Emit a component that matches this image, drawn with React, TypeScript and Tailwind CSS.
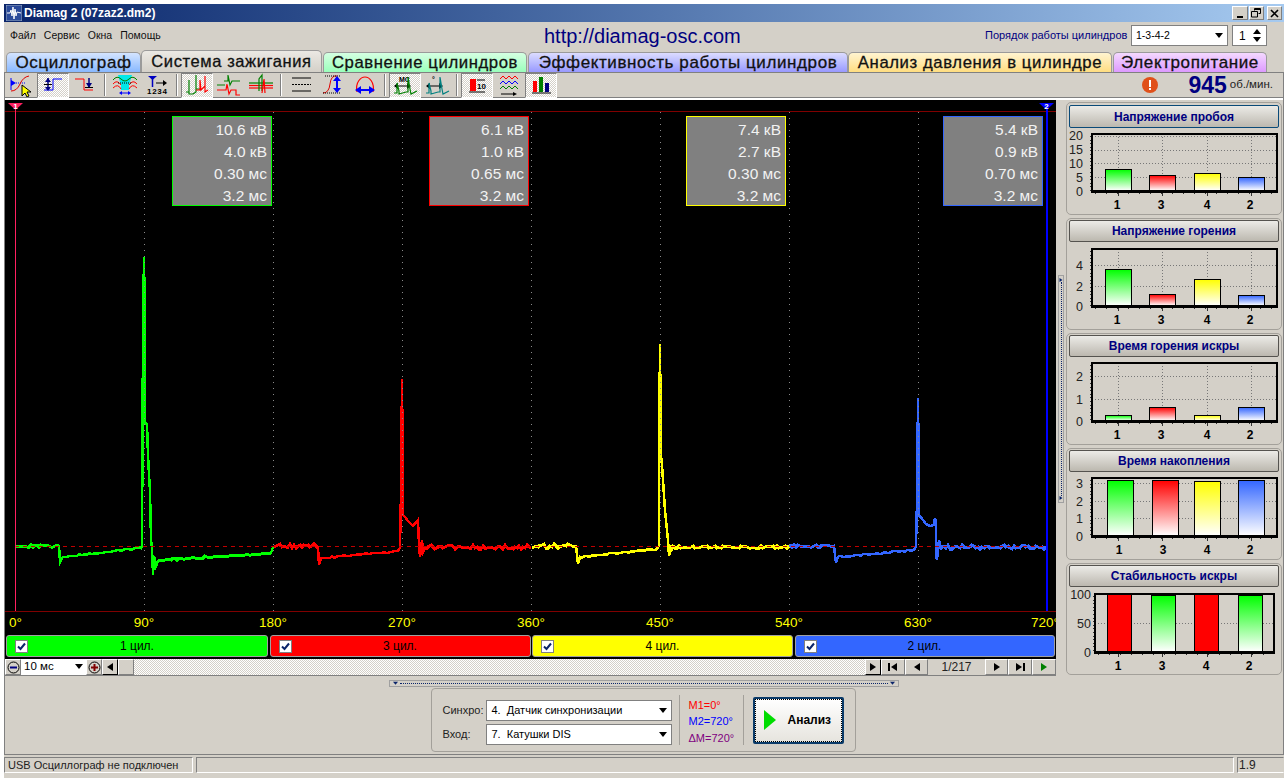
import type { ReactNode } from "react";

const GREEN = "#00ff00";
const RED = "#ff0000";
const YELLOW = "#ffff00";
const BLUE = "#3366ff";

// small repeatable noise so the traces look the same on every run
function makeRandom(seed: number) {
  let s = seed;
  return () => {
    s = (s * 1103515245 + 12345) & 0x7fffffff;
    return s / 0x7fffffff;
  };
}

type Pt = [number, number];

function noisy(x0: number, x1: number, y0: number, y1: number, amp: number, seed: number): Pt[] {
  const rnd = makeRandom(seed);
  const out: Pt[] = [];
  for (let x = x0; x <= x1; x += 2) {
    const t = (x - x0) / (x1 - x0);
    out.push([x, Math.round(y0 + (y1 - y0) * t + (rnd() - 0.5) * amp * 2)]);
  }
  return out;
}

const toPoints = (pts: Pt[]) => pts.map((p) => p.join(",")).join(" ");

const traces = [
  {
    color: GREEN,
    head: noisy(15, 60, 546, 546, 1, 7),
    dip: [[60, 562], [62, 558]] as Pt[],
    ramp: noisy(63, 141, 557, 548, 0.8, 11),
    spike: [[142, 546], [143, 327], [144, 257], [145, 330], [145, 423], [147, 424], [148, 455], [149, 475], [150, 490], [151, 540], [152, 548], [153, 575], [154, 556], [156, 566], [158, 561]] as Pt[],
    tail: noisy(159, 272, 560, 553, 0.8, 13),
    end: [[273, 547]] as Pt[],
  },
  {
    color: RED,
    head: noisy(274, 318, 546, 546, 2, 17),
    dip: [[319, 565], [321, 558]] as Pt[],
    ramp: noisy(322, 399, 558, 551, 0.8, 19),
    spike: [[400, 548], [401, 490], [402, 379], [403, 490], [403, 515], [405, 517], [408, 521], [413, 526], [418, 520], [419, 545], [420, 557], [422, 540], [423, 552]] as Pt[],
    tail: noisy(425, 531, 547, 547, 2, 23),
    end: [] as Pt[],
  },
  {
    color: YELLOW,
    head: noisy(532, 577, 546, 546, 2, 29),
    dip: [[578, 564], [580, 557]] as Pt[],
    ramp: noisy(581, 658, 557, 549, 0.8, 31),
    spike: [[659, 546], [659, 460], [660, 344], [661, 455], [662, 465], [665, 510], [668, 540], [669, 556], [671, 545], [672, 549]] as Pt[],
    tail: noisy(673, 789, 547, 547, 1.2, 37),
    end: [] as Pt[],
  },
  {
    color: BLUE,
    head: noisy(790, 835, 546, 546, 1.2, 41),
    dip: [[836, 563], [838, 557]] as Pt[],
    ramp: noisy(839, 915, 557, 550, 0.8, 43),
    spike: [[916, 546], [917, 500], [918, 398], [919, 492], [919, 516], [921, 517], [923, 520], [926, 524], [930, 526], [934, 525], [935, 518], [936, 522], [936, 555], [937, 560], [939, 540], [941, 550]] as Pt[],
    tail: noisy(942, 1047, 547, 547, 1.8, 47),
    end: [] as Pt[],
  },
];

const readouts = [
  { color: "border-[#00ff00]", left: "left-[167px]", rows: ["10.6 кВ", "4.0 кВ", "0.30 мс", "3.2 мс"] },
  { color: "border-[#ff0000]", left: "left-[424px]", rows: ["6.1 кВ", "1.0 кВ", "0.65 мс", "3.2 мс"] },
  { color: "border-[#ffff00]", left: "left-[681px]", rows: ["7.4 кВ", "2.7 кВ", "0.30 мс", "3.2 мс"] },
  { color: "border-[#3366ff]", left: "left-[938px]", rows: ["5.4 кВ", "0.9 кВ", "0.70 мс", "3.2 мс"] },
];

const degrees = [0, 90, 180, 270, 360, 450, 540, 630, 720];

const tabs = [
  { label: "Осциллограф", cls: "w-[135px] h-[20px] text-[17px] from-[#d4e4ff] to-[#88b8ff]" },
  { label: "Система зажигания", cls: "w-[181px] h-[22px] text-[16.5px] from-[#ebe9e4] to-[#d4d0c8]" },
  { label: "Сравнение цилиндров", cls: "w-[204px] h-[20px] ml-[1px] text-[16.7px] from-[#d4ffe2] to-[#99ffbb]" },
  { label: "Эффективность работы цилиндров", cls: "w-[320px] h-[20px] ml-[1px] text-[17px] from-[#dcdcff] to-[#9999ff]" },
  { label: "Анализ давления в цилиндре", cls: "w-[264px] h-[20px] text-[16.7px] from-[#fff4d0] to-[#ffdd80]" },
  { label: "Электропитание", cls: "w-[154px] h-[20px] ml-[1px] text-[17px] from-[#f4d8ff] to-[#dd99ff]" },
];

const channels = [
  { label: "1 цил.", cls: "w-[262px] bg-[#00ff00]" },
  { label: "3 цил.", cls: "w-[261px] bg-[#ff0000]" },
  { label: "4 цил.", cls: "w-[261px] bg-[#ffff00]" },
  { label: "2 цил.", cls: "w-[260px] bg-[#3366ff]" },
];

type Bar = { x0: number; x1: number; top: number; color: string };

type Chart = {
  title: string;
  focused?: boolean;
  height: string;
  top: number;
  frame: [number, number, number, number];
  yLabels: [string, number][];
  grid: number[];
  bars: Bar[];
  labelX: number[];
  labelY: number;
};

const xA = [1105, 1149, 1194, 1238];
const barW = 27;
const mkBars = (xs: number[], tops: number[], w = barW, colors = [GREEN, RED, YELLOW, BLUE]): Bar[] =>
  xs.map((x0, i) => ({ x0, x1: x0 + w, top: tops[i], color: colors[i] }));

const charts: Chart[] = [
  {
    title: "Напряжение пробоя",
    focused: true,
    height: "h-[113px]",
    top: 102,
    frame: [1092, 1277, 134, 191],
    yLabels: [["20", 135], ["15", 149], ["10", 163], ["5", 177], ["0", 191]],
    grid: [136, 150, 163, 177],
    bars: mkBars(xA, [169, 175, 173, 177]),
    labelX: [1117, 1161, 1207, 1250],
    labelY: 209,
  },
  {
    title: "Напряжение горения",
    height: "h-[112px]",
    top: 218,
    frame: [1092, 1277, 249, 306],
    yLabels: [["4", 265], ["2", 286], ["0", 306]],
    grid: [265, 286],
    bars: mkBars(xA, [269, 294, 279, 295]),
    labelX: [1117, 1161, 1207, 1250],
    labelY: 324,
  },
  {
    title: "Время горения искры",
    height: "h-[112px]",
    top: 333,
    frame: [1092, 1277, 363, 421],
    yLabels: [["2", 376], ["1", 399], ["0", 421]],
    grid: [376, 399],
    bars: mkBars(xA, [415, 407, 415, 407]),
    labelX: [1117, 1161, 1207, 1250],
    labelY: 439,
  },
  {
    title: "Время накопления",
    height: "h-[112px]",
    top: 448,
    frame: [1092, 1277, 478, 536],
    yLabels: [["3", 483], ["2", 501], ["1", 518], ["0", 536]],
    grid: [483, 501, 518],
    bars: mkBars([1107, 1152, 1194, 1238], [480, 480, 481, 480]),
    labelX: [1119, 1163, 1207, 1250],
    labelY: 554,
  },
  {
    title: "Стабильность искры",
    height: "h-[112px]",
    top: 563,
    frame: [1095, 1274, 594, 652],
    yLabels: [["100", 594], ["50", 623], ["0", 652]],
    grid: [623],
    bars: mkBars([1107, 1151, 1194, 1238], [594, 595, 594, 595], 25, [RED, GREEN, RED, GREEN]),
    labelX: [1118, 1162, 1206, 1249],
    labelY: 670,
  },
];

function Tri({ dir = "down", color = "#000", size = 8 }: { dir?: "down" | "up" | "left" | "right"; color?: string; size?: number }) {
  const pts = {
    down: "0,1 8,1 4,6",
    up: "0,6 8,6 4,1",
    left: "7,0 7,8 1,4",
    right: "1,0 1,8 7,4",
  }[dir];
  return (
    <svg width={size} height={size} viewBox="0 0 8 8" className="shrink-0">
      <polygon points={pts} fill={color} />
    </svg>
  );
}

function Dropdown({ label, cls }: { label: string; cls: string }) {
  return (
    <div className={`flex items-center justify-between bg-white border border-[#808080] ${cls}`}>
      <span className="whitespace-pre">{label}</span>
      <Tri />
    </div>
  );
}

function CheckBox() {
  return (
    <span className="flex items-center justify-center w-[13px] h-[13px] bg-white border border-[#808080]">
      <svg width="9" height="9" viewBox="0 0 9 9">
        <polyline points="1,4.5 3.5,7 8,1.5" fill="none" stroke="#0a246a" strokeWidth="2" />
      </svg>
    </span>
  );
}

// toolbar drawings
const ic = {
  cursor: (
    <svg width="26" height="24" viewBox="0 0 26 24">
      <polygon points="3,7 8,10 3,13" fill="#0000ff" />
      <line x1="3" y1="5" x2="3" y2="17" stroke="#0000ff" />
      <line x1="8" y1="10" x2="17" y2="10" stroke="#0000ff" strokeDasharray="1 1" />
      <path d="M3 18 Q9 18 12 11 T21 3" fill="none" stroke="#e00000" />
      <polygon points="14,12 14,23 17,20 19,24 21,23 19,19 23,19" fill="#ffff00" stroke="#000" />
    </svg>
  ),
  rise: (
    <svg width="24" height="24" viewBox="0 0 24 24">
      <polyline points="3,17 12,17 12,6 21,6" fill="none" stroke="#0000ff" />
      <line x1="7" y1="5" x2="7" y2="16" stroke="#000080" strokeWidth="1.5" />
      <polygon points="4,9 10,9 7,5" fill="#000080" />
      <polygon points="4,14 10,14 7,18" fill="#000080" />
      <line x1="3" y1="11.5" x2="11" y2="11.5" stroke="#000" />
    </svg>
  ),
  fall: (
    <svg width="24" height="24" viewBox="0 0 24 24">
      <polyline points="2,6 11,6 11,17 20,17" fill="none" stroke="#ff0000" />
      <line x1="16" y1="5" x2="16" y2="14" stroke="#000080" strokeWidth="1.5" />
      <polygon points="13,10 19,10 16,15" fill="#000080" />
      <line x1="12" y1="14.5" x2="20" y2="14.5" stroke="#000" />
    </svg>
  ),
  window: (
    <svg width="26" height="24" viewBox="0 0 26 24">
      <polygon points="6,2 20,2 17,12 17,17 9,17 9,12" fill="#00e8e8" />
      <path d="M1 7 Q5 2 9 6 T17 6 T25 7" fill="none" stroke="#008000" />
      <path d="M1 11 Q5 6 9 12 M17 12 Q21 6 25 11" fill="none" stroke="#ff0000" />
      <path d="M1 15 Q6 10 9 16 M17 16 Q20 10 25 15" fill="none" stroke="#ff0000" />
      <line x1="6" y1="10" x2="20" y2="10" stroke="#000" strokeDasharray="1 1" />
      <line x1="9" y1="20" x2="17" y2="20" stroke="#0000ff" />
      <polygon points="7,20 10,18 10,22" fill="#0000ff" />
      <polygon points="19,20 16,18 16,22" fill="#0000ff" />
    </svg>
  ),
  order: (
    <svg width="26" height="24" viewBox="0 0 26 24">
      <polygon points="4,3 13,3 8.5,7" fill="#0000c0" />
      <line x1="8.5" y1="5" x2="8.5" y2="14" stroke="#0000c0" strokeWidth="1.5" />
      <line x1="12" y1="10" x2="21" y2="10" stroke="#000" />
      <polygon points="23,10 19,7 19,13" fill="#000" />
      <text x="3" y="21" fontSize="8" fontWeight="700" fill="#000" textLength="20">1234</text>
    </svg>
  ),
  stacked: (
    <svg width="26" height="26" viewBox="0 0 26 26">
      <polyline points="2,20 5,20 5,8 5,22 9,22" fill="none" stroke="#008000" strokeWidth="1.2" />
      <polyline points="9,22 12,20 12,3 12,17 16,17" fill="none" stroke="#008000" strokeWidth="1.2" />
      <polyline points="12,18 16,18 16,8 17,18 21,14 21,4 21,20 24,18" fill="none" stroke="#ff0000" strokeWidth="1.2" />
    </svg>
  ),
  rows: (
    <svg width="26" height="24" viewBox="0 0 26 24">
      <polyline points="8,8 12,8 12,2 14,12 16,8 24,8" fill="none" stroke="#008000" strokeWidth="1.2" />
      <line x1="1" y1="12" x2="9" y2="12" stroke="#008000" />
      <polyline points="1,17 8,17 10,17 11,11 13,21 15,17 20,17 20,22 24,22" fill="none" stroke="#ff0000" strokeWidth="1.2" />
    </svg>
  ),
  overlay: (
    <svg width="26" height="24" viewBox="0 0 26 24">
      <line x1="1" y1="10" x2="25" y2="10" stroke="#008000" strokeWidth="1.2" />
      <line x1="1" y1="15" x2="25" y2="15" stroke="#ff0000" strokeWidth="1.2" />
      <line x1="1" y1="12.5" x2="25" y2="12.5" stroke="#ff0000" strokeWidth="1.2" />
      <polyline points="11,18 11,6 14,2 14,18" fill="none" stroke="#008000" strokeWidth="1.2" />
      <polyline points="14,20 16,6 17,20" fill="none" stroke="#ff0000" strokeWidth="1.2" />
    </svg>
  ),
  lines: (
    <svg width="22" height="24" viewBox="0 0 22 24">
      <line x1="2" y1="5" x2="21" y2="5" stroke="#000" />
      <line x1="2" y1="11.5" x2="21" y2="11.5" stroke="#000" strokeDasharray="2 1" />
      <line x1="2" y1="18" x2="21" y2="18" stroke="#000" />
    </svg>
  ),
  swing: (
    <svg width="24" height="24" viewBox="0 0 24 24">
      <path d="M2 20 Q8 20 9 11 T16 3" fill="none" stroke="#e00000" />
      <line x1="4" y1="3" x2="20" y2="3" stroke="#000" strokeDasharray="1 1" />
      <line x1="2" y1="20" x2="20" y2="20" stroke="#000" strokeDasharray="1 1" />
      <line x1="16" y1="5" x2="16" y2="18" stroke="#0000ff" strokeWidth="2" />
      <polygon points="12,8 20,8 16,3" fill="#0000ff" />
      <polygon points="12,15 20,15 16,20" fill="#0000ff" />
    </svg>
  ),
  arch: (
    <svg width="24" height="24" viewBox="0 0 24 24">
      <path d="M4 19 C2 9 8 4 12 4 S22 9 20 19" fill="none" stroke="#ff0000" strokeWidth="1.2" />
      <line x1="5" y1="17" x2="19" y2="17" stroke="#0000ff" strokeWidth="2" />
      <polygon points="2,17 8,13 8,21" fill="#0000ff" />
      <polygon points="22,17 16,13 16,21" fill="#0000ff" />
    </svg>
  ),
  ms: (
    <svg width="26" height="24" viewBox="0 0 26 24">
      <text x="7" y="9" fontSize="7" fontWeight="700" fill="#000">МС</text>
      <line x1="3" y1="13" x2="18" y2="13" stroke="#000" />
      <polygon points="2,13 6,10 6,16" fill="#000" />
      <polygon points="19,13 15,10 15,16" fill="#000" />
      <polyline points="2,20 5,20 5,10 7,18 7,21 14,19 16,19 16,4 18,16 19,21 25,18" fill="none" stroke="#008000" strokeWidth="1.2" />
    </svg>
  ),
  deg: (
    <svg width="26" height="24" viewBox="0 0 26 24">
      <text x="8" y="9" fontSize="7" fontWeight="700" fill="#000">°</text>
      <line x1="3" y1="13" x2="18" y2="13" stroke="#000" />
      <polygon points="2,13 6,10 6,16" fill="#000" />
      <polygon points="19,13 15,10 15,16" fill="#000" />
      <polyline points="2,20 5,20 5,10 7,18 7,21 14,19 16,19 16,4 18,16 19,21 25,18" fill="none" stroke="#008080" strokeWidth="1.2" />
    </svg>
  ),
  barTen: (
    <svg width="24" height="24" viewBox="0 0 24 24">
      <rect x="5" y="6" width="6" height="12" fill="#ff0000" />
      <line x1="12" y1="7" x2="20" y2="7" stroke="#000" />
      <text x="12" y="16" fontSize="8" fontWeight="700" fill="#000">10</text>
      <line x1="4" y1="19" x2="20" y2="19" stroke="#000" />
    </svg>
  ),
  waves: (
    <svg width="26" height="24" viewBox="0 0 26 24">
      <polyline points="4,6 7,3 10,6 13,3 16,6 19,3 22,6" fill="none" stroke="#ff0000" />
      <polyline points="4,11 7,8 10,11 13,8 16,11 19,8 22,11" fill="none" stroke="#0000ff" />
      <polyline points="4,16 7,13 10,16 13,13 16,16 19,13 22,16" fill="none" stroke="#008000" />
      <line x1="5" y1="21" x2="19" y2="21" stroke="#000" />
      <polygon points="21,21 17,19 17,23" fill="#000" />
    </svg>
  ),
  bars: (
    <svg width="24" height="24" viewBox="0 0 24 24">
      <rect x="4" y="8" width="4" height="11" fill="#ff0000" />
      <rect x="10" y="4" width="4" height="15" fill="#008000" />
      <rect x="16" y="10" width="4" height="9" fill="#000080" />
      <line x1="3" y1="20" x2="22" y2="20" stroke="#000" />
    </svg>
  ),
};

const toolGroups: { icon: ReactNode; pressed?: boolean }[][] = [
  [{ icon: ic.cursor }, { icon: ic.rise, pressed: true }, { icon: ic.fall }],
  [{ icon: ic.window }, { icon: ic.order }],
  [{ icon: ic.stacked, pressed: true }, { icon: ic.rows }, { icon: ic.overlay }],
  [{ icon: ic.lines }, { icon: ic.swing }, { icon: ic.arch }],
  [{ icon: ic.ms, pressed: true }, { icon: ic.deg }],
  [{ icon: ic.barTen, pressed: true }, { icon: ic.waves }, { icon: ic.bars, pressed: true }],
];

function ToolButton({ icon, pressed }: { icon: ReactNode; pressed?: boolean }) {
  return (
    <div
      className={
        pressed
          ? "flex items-center justify-center w-[32px] h-[25px] bg-[repeating-conic-gradient(#d4d0c8_0_25%,#ffffff_0_50%)] bg-[length:2px_2px] border-t border-l border-[#808080] border-r-white border-b-white border-r border-b"
          : "flex items-center justify-center w-[32px] h-[25px]"
      }
    >
      {icon}
    </div>
  );
}

function Plot() {
  return (
    <div className="relative h-[535px] w-[1051px] bg-black">
      <svg width="1051" height="535" viewBox="5 100 1051 535" className="block text-[13.5px]">
        {traces.map((t) => (
          <g key={t.color} fill="none" stroke={t.color} shapeRendering="crispEdges">
            <polyline points={toPoints([...t.head, ...t.dip, ...t.ramp, ...t.spike, ...t.tail, ...t.end])} strokeWidth="2.5" />
            <polyline points={toPoints(t.head)} strokeWidth="3" />
            <polyline points={toPoints(t.tail)} strokeWidth="3" />
          </g>
        ))}
        {degrees.slice(1, 8).map((d) => {
          const x = 15 + (d / 90) * 129;
          return <line key={d} x1={x} x2={x} y1="112" y2="611" stroke="#8a8a8a" strokeDasharray="1 5" shapeRendering="crispEdges" />;
        })}
        <line x1="15" x2="1047" y1="546.5" y2="546.5" stroke="#c00000" strokeDasharray="4 4" shapeRendering="crispEdges" />
        <line x1="5" x2="1056" y1="111.5" y2="111.5" stroke="#800000" shapeRendering="crispEdges" />
        <line x1="5" x2="1056" y1="611.5" y2="611.5" stroke="#800000" shapeRendering="crispEdges" />
        <line x1="15.5" x2="15.5" y1="104" y2="611" stroke="#ff2060" shapeRendering="crispEdges" />
        <line x1="1046.5" x2="1046.5" y1="104" y2="611" stroke="#0000ff" strokeWidth="2" shapeRendering="crispEdges" />
        <polygon points="8,103 23,103 15.5,110" fill="#ff2060" />
        <polygon points="1039,103 1054,103 1046.5,110" fill="#0000ff" />
        <text x="15.5" y="109" fontSize="8" fontWeight="700" fill="#fff" textAnchor="middle">1</text>
        <text x="1046.5" y="109" fontSize="8" fontWeight="700" fill="#fff" textAnchor="middle">2</text>
        {degrees.map((d) => {
          const x = d === 720 ? 1045 : 15 + (d / 90) * 129;
          return (
            <text key={d} x={d === 0 ? 9 : x} y="627" fill="#ffff00" textAnchor={d === 0 ? "start" : "middle"}>
              {d}°
            </text>
          );
        })}
      </svg>
      {readouts.map((r) => (
        <div key={r.left} className={`absolute top-[16px] ${r.left} w-[100px] h-[90px] bg-[#808080] border ${r.color} flex flex-col pr-[4px] pt-[2px] text-right text-[15.5px] leading-[22px] text-[#f2f2f2]`}>
          {r.rows.map((row) => (
            <div key={row}>{row}</div>
          ))}
        </div>
      ))}
    </div>
  );
}

function ChannelBar() {
  return (
    <div className="flex h-[24px] w-[1051px] gap-[1.5px] bg-black pl-[1px] pb-[2px]">
      {channels.map((c) => (
        <div key={c.label} className={`relative flex items-center justify-center rounded-[3px] border border-[#a0a0a0] text-[12px] text-black ${c.cls}`}>
          <span className="absolute left-[8px] top-[4px]">
            <CheckBox />
          </span>
          {c.label}
        </div>
      ))}
    </div>
  );
}

const raised = "flex items-center justify-center h-[16px] bg-[#d4d0c8] border border-t-white border-l-white border-r-[#808080] border-b-[#808080]";

function Transport() {
  return (
    <div className="flex items-center h-[17px] w-[1051px] border-b border-[#808080]">
      <div className={`${raised} w-[16px]`}>
        <svg width="13" height="13" viewBox="0 0 13 13">
          <circle cx="6.5" cy="6.5" r="5.5" fill="none" stroke="#000" />
          <line x1="3" x2="10" y1="6.5" y2="6.5" stroke="#000080" strokeWidth="2" />
        </svg>
      </div>
      <Dropdown label="10 мс" cls="!border-0 w-[65px] h-[16px] pl-[3px] pr-[3px] text-[11.5px]" />
      <div className={`${raised} w-[16px]`}>
        <svg width="13" height="13" viewBox="0 0 13 13">
          <circle cx="6.5" cy="6.5" r="5.5" fill="none" stroke="#000" />
          <line x1="3" x2="10" y1="6.5" y2="6.5" stroke="#800000" strokeWidth="2" />
          <line x1="6.5" x2="6.5" y1="3" y2="10" stroke="#800000" strokeWidth="2" />
        </svg>
      </div>
      <div className={`${raised} w-[16px] border-r-black border-b-black`}>
        <Tri dir="left" />
      </div>
      <div className={`${raised} w-[16px]`} />
      <div className="h-[16px] flex-1 bg-[repeating-conic-gradient(#d4d0c8_0_25%,#ffffff_0_50%)] bg-[length:2px_2px]" />
      <div className={`${raised} w-[16px] border-r-black border-b-black`}>
        <Tri dir="right" />
      </div>
      <div className={`${raised} w-[24px]`}>
        <span className="w-[2px] h-[8px] bg-black" />
        <Tri dir="left" />
      </div>
      <div className={`${raised} w-[23px]`}>
        <Tri dir="left" />
      </div>
      <div className="w-[57px] text-center text-[12px] leading-[16px] text-[#222]">1/217</div>
      <div className={`${raised} w-[23px]`}>
        <Tri dir="right" />
      </div>
      <div className={`${raised} w-[24px]`}>
        <Tri dir="right" />
        <span className="w-[2px] h-[8px] bg-black" />
      </div>
      <div className={`${raised} w-[24px]`}>
        <Tri dir="right" color="#008000" />
      </div>
    </div>
  );
}

function ChartCard({ chart }: { chart: Chart }) {
  const [fx0, fx1, fy0, fy1] = chart.frame;
  const svgTop = chart.top + (chart.focused ? 26 : 24);
  const ticks: number[] = [];
  for (let x = fx0 + 3; x < fx1; x += 11) ticks.push(x);
  const leftTicks: number[] = [];
  for (let y = fy0 + 2; y < fy1; y += 3.6) leftTicks.push(Math.round(y));
  const vGrid = [1118, 1162, 1207, 1251];
  return (
    <div className={`${chart.height} rounded-[5px] border border-[#a3a09a] px-[2px] ${chart.focused ? "pt-[2px]" : "pt-[1px]"}`}>
      <div
        className={`flex items-center justify-center rounded-[2px] border bg-gradient-to-b from-[#ecebe7] to-[#bcb8af] text-[12px] font-bold text-[#000080] ${
          chart.focused ? "h-[23px] border-[#0a4a78]" : "h-[22px] border-[#55534f]"
        }`}
      >
        {chart.title}
      </div>
      <svg width="216" height="86" viewBox={`1066 ${svgTop} 216 86`} className="-ml-[3px] block overflow-visible text-[12.5px]">
        <defs>
          {[
            ["g", GREEN],
            ["r", RED],
            ["y", YELLOW],
            ["b", BLUE],
          ].map(([id, color]) => (
            <linearGradient key={id} id={`fade-${id}`} x1="0" y1="0" x2="0" y2="1">
              <stop offset="0" stopColor={color} />
              <stop offset="1" stopColor="#ffffff" />
            </linearGradient>
          ))}
        </defs>
        {chart.grid.map((y) => (
          <line key={y} x1={fx0} x2={fx1} y1={y + 0.5} y2={y + 0.5} stroke="#777" strokeDasharray="1 2" shapeRendering="crispEdges" />
        ))}
        {vGrid.map((x) => (
          <line key={x} x1={x + 0.5} x2={x + 0.5} y1={fy0} y2={fy1} stroke="#777" strokeDasharray="1 2" shapeRendering="crispEdges" />
        ))}
        {leftTicks.map((y) => (
          <line key={y} x1={fx0 - 2} x2={fx0} y1={y + 0.5} y2={y + 0.5} stroke="#333" shapeRendering="crispEdges" />
        ))}
        {ticks.map((x) => (
          <line key={x} x1={x + 0.5} x2={x + 0.5} y1={fy1} y2={fy1 + 3} stroke="#333" shapeRendering="crispEdges" />
        ))}
        {vGrid.map((x) => (
          <line key={x} x1={x + 0.5} x2={x + 0.5} y1={fy1} y2={fy1 + 5} stroke="#333" shapeRendering="crispEdges" />
        ))}
        {chart.bars.map((b, i) => {
          const solid = chart.title === "Стабильность искры" && b.color === RED;
          const id = b.color === GREEN ? "g" : b.color === RED ? "r" : b.color === YELLOW ? "y" : "b";
          return (
            <rect
              key={i}
              x={b.x0 + 0.5}
              y={b.top + 0.5}
              width={b.x1 - b.x0 - 1}
              height={fy1 - b.top - 1}
              fill={solid ? RED : `url(#fade-${id})`}
              stroke="#000"
              shapeRendering="crispEdges"
            />
          );
        })}
        <rect x={fx0} y={fy0} width={fx1 - fx0} height={fy1 - fy0} fill="none" stroke="#000" strokeWidth="2" shapeRendering="crispEdges" />
        <line x1={fx0 - 1} x2={fx1 + 1} y1={fy1} y2={fy1} stroke="#000" strokeWidth="3" shapeRendering="crispEdges" />
        {chart.yLabels.map(([t, y]) => (
          <text key={t} x={fx0 === 1095 ? 1091 : 1083} y={y + 5} textAnchor="end" fill="#222">
            {t}
          </text>
        ))}
        {chart.bars.map((_, i) => (
          <text key={i} x={chart.labelX[i]} y={chart.labelY} textAnchor="middle" fontWeight="700" fontSize="12" fill="#000">
            {[1, 3, 4, 2][i]}
          </text>
        ))}
      </svg>
    </div>
  );
}

export default function App() {
  return (
    <div className="flex h-[778px] w-[1288px] flex-col overflow-hidden bg-white px-[4px] pt-[4px] font-['Liberation_Sans',Arial,sans-serif]">
      <div className="flex h-full flex-col bg-[#d4d0c8]">
        {/* title bar */}
        <div className="flex h-[18px] shrink-0 items-center bg-gradient-to-r from-[#0a246a] to-[#a6caf0] pl-[2px] pr-[2px]">
          <svg width="16" height="16" viewBox="0 0 16 16" className="mr-[2px]">
            <rect width="16" height="16" fill="#2a4a9a" stroke="#9ab" />
            <polyline points="1,8 4,8 5,5 6,11 7,2 8,14 9,4 10,11 11,7 15,8" fill="none" stroke="#fff" />
          </svg>
          <span className="text-[12px] font-bold text-white">Diamag 2 (07zaz2.dm2)</span>
          <div className="ml-auto flex items-center">
            <div className={`${raised} !h-[14px] w-[16px] items-end pb-[1px]`}>
              <span className="h-[2px] w-[6px] bg-black" />
            </div>
            <div className={`${raised} !h-[14px] ml-[1px] w-[15px]`}>
              <svg width="11" height="10" viewBox="0 0 11 10">
                <path d="M3.5 2.5V.5h6v5h-2M.5 3.5h6v5.5h-6z M3.5 1.5h6" fill="none" stroke="#000" />
              </svg>
            </div>
            <div className={`${raised} !h-[14px] ml-[3px] w-[15px]`}>
              <svg width="9" height="9" viewBox="0 0 9 9">
                <path d="M1 1l7 7M8 1L1 8" stroke="#000" strokeWidth="1.6" />
              </svg>
            </div>
          </div>
        </div>

        {/* menu row */}
        <div className="flex h-[28px] shrink-0 items-center pb-[1px] text-[10.5px]">
          <div className="ml-[6px] flex w-[534px] gap-[8px] text-[#111]">
            <span>Файл</span>
            <span>Сервис</span>
            <span>Окна</span>
            <span>Помощь</span>
          </div>
          <span className="w-[441px] text-[20px] text-[#000080]">http://diamag-osc.com</span>
          <span className="w-[146px] whitespace-nowrap text-[11px] text-[#000080]">Порядок работы цилиндров</span>
          <Dropdown label="1-3-4-2" cls="w-[97px] h-[21px] pl-[4px] pr-[4px] text-[10.5px]" />
          <div className="ml-[4px] flex h-[21px] w-[35px] items-center justify-between border border-[#808080] bg-white pl-[6px] pr-[5px] text-[12px]">
            1
            <span className="flex flex-col">
              <Tri dir="up" />
              <Tri />
            </span>
          </div>
        </div>

        {/* tabs */}
        <div className="flex h-[22px] shrink-0 items-end pl-[2px]">
          {tabs.map((t) => (
            <div
              key={t.label}
              className={`flex items-center justify-center whitespace-nowrap rounded-t-[5px] border border-b-0 border-[#9a9a9a] bg-gradient-to-b tracking-[0.6px] text-[#111] [-webkit-text-stroke:0.3px_#111] ${t.cls}`}
            >
              {t.label}
            </div>
          ))}
        </div>

        {/* body */}
        <div className="flex h-[683px] shrink-0 flex-col border border-[#808080]">
          {/* toolbar */}
          <div className="flex h-[27px] shrink-0 items-center border-b-2 border-b-white shadow-[inset_0_-1px_0_#808080] pb-[1px]">
            {toolGroups.map((group, i) => (
              <div key={i} className="flex items-center">
                {i > 0 && <div className="mx-[3px] h-[22px] w-[2px] border-l border-r border-l-[#808080] border-r-white" />}
                {group.map((b, j) => (
                  <ToolButton key={j} icon={b.icon} pressed={b.pressed} />
                ))}
              </div>
            ))}
            <div className="ml-auto flex items-center">
              <svg width="16" height="16" viewBox="0 0 16 16">
                <circle cx="8" cy="8" r="8" fill="#e0501a" />
                <rect x="7" y="3" width="2" height="7" fill="#fff" />
                <rect x="7" y="11" width="2" height="2" fill="#fff" />
              </svg>
              <span className="ml-[30px] text-[23px] font-bold leading-none text-[#000080]">945</span>
              <span className="ml-[3px] mr-[10px] text-[11.5px] text-[#222]">об./мин.</span>
            </div>
          </div>

          {/* plot + side charts */}
          <div className="flex h-[577px] shrink-0">
            <div className="flex w-[1051px] shrink-0 flex-col">
              <Plot />
              <ChannelBar />
              <Transport />
            </div>
            <div className="flex w-[10px] shrink-0 items-center justify-center">
              <div className="flex h-[228px] w-[6px] flex-col items-center justify-between border border-[#a0a0a0] py-[2px]">
                <Tri dir="right" color="#0a246a" size={4} />
                <div className="flex-1 border-l border-dotted border-[#0a246a]" />
                <Tri dir="right" color="#0a246a" size={4} />
              </div>
            </div>
            <div className="flex w-[216px] shrink-0 flex-col gap-[3px] pt-[2px]">
              {charts.map((c) => (
                <ChartCard key={c.title} chart={c} />
              ))}
            </div>
          </div>

          {/* horizontal splitter */}
          <div className="flex h-[11px] shrink-0 justify-center pt-[3px]">
            <div className="flex h-[7px] w-[510px] items-center justify-between border border-[#a0a0a0] px-[3px]">
              <Tri color="#0a246a" size={5} />
              <div className="mx-[2px] flex-1 border-t border-dotted border-[#0a246a]" />
              <Tri color="#0a246a" size={5} />
            </div>
          </div>

          {/* analysis panel */}
          <div className="flex justify-center pr-[2px]">
            <div className="flex h-[64px] w-[425px] items-center rounded-[4px] border border-[#a3a09a] pl-[11px] text-[11px] text-[#222]">
              <div className="grid grid-cols-[43px_186px] grid-rows-[21px_21px] items-center gap-y-[3px] pt-[5px]">
                <span>Синхро:</span>
                <Dropdown label="4.  Датчик синхронизации" cls="h-[21px] pl-[5px] pr-[4px] text-black" />
                <span>Вход:</span>
                <Dropdown label="7.  Катушки DIS" cls="h-[21px] pl-[5px] pr-[4px] text-black" />
              </div>
              <div className="ml-[7px] h-[50px] w-px bg-[#a3a09a]" />
              <div className="ml-[9px] flex w-[54px] flex-col gap-[2.5px] pt-[2px] text-[11px] leading-[14px]">
                <span className="text-[#ff0000]">M1=0°</span>
                <span className="text-[#0000ff]">M2=720°</span>
                <span className="text-[#800080]">ΔM=720°</span>
              </div>
              <div className="h-[50px] w-px bg-[#a3a09a]" />
              <div className="ml-[9px] flex h-[47px] w-[91px] items-center rounded-[2px] border-2 border-[#0a3a68] bg-gradient-to-b from-white to-[#e6e4de] pl-[9px] text-[12px] font-bold text-black outline-1 -outline-offset-3 outline-dotted outline-black">
                <svg width="12" height="20" viewBox="0 0 12 20">
                  <polygon points="0,0 12,10 0,20" fill="#00dd00" />
                </svg>
                <span className="ml-[12px]">Анализ</span>
              </div>
            </div>
          </div>
        </div>

        {/* status bar */}
        <div className="mt-[2px] flex h-[16px] shrink-0 gap-[3px] whitespace-nowrap text-[11px] leading-[15px] text-[#222]">
          <div className="w-[189px] border border-t-[#808080] border-l-[#808080] border-r-white border-b-white pl-[3px]">USB Осциллограф не подключен</div>
          <div className="flex-1 border border-t-[#808080] border-l-[#808080] border-r-white border-b-white" />
          <div className="w-[47px] border border-t-[#808080] border-l-[#808080] border-r-[#d4d0c8] border-b-white pl-[1px] text-[12px]">1.9</div>
        </div>
      </div>
    </div>
  );
}
